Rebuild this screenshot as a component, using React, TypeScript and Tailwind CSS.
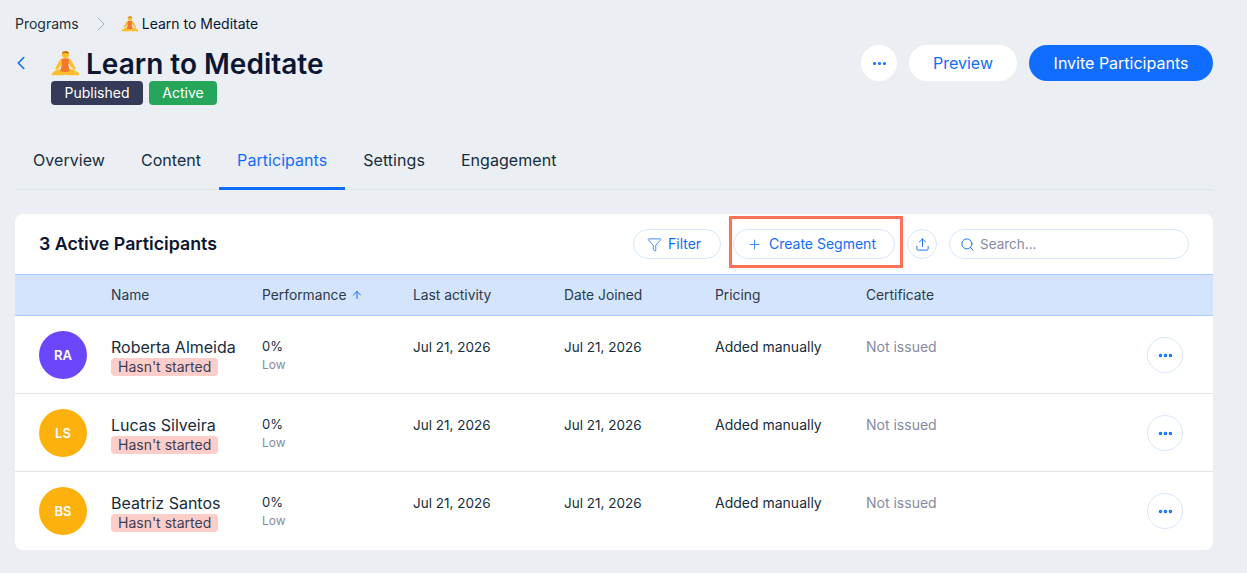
import { ChevronLeft, ChevronRight, Filter, Plus, Search, Upload, ArrowUp, MoreHorizontal } from "lucide-react";

const font = "font-['Inter','Liberation_Sans',sans-serif]";

const participants = [
  { initials: "RA", name: "Roberta Almeida", color: "bg-[#6b46fb]" },
  { initials: "LS", name: "Lucas Silveira", color: "bg-[#fdb10c]" },
  { initials: "BS", name: "Beatriz Santos", color: "bg-[#fdb10c]" },
];

const tabs = ["Overview", "Content", "Participants", "Settings", "Engagement"];
const columns = ["Performance", "Last activity", "Date Joined", "Pricing", "Certificate"];

function Meditate({ size }: { size: number }) {
  return (
    <svg width={size} height={size} viewBox="0 0 32 32" className="shrink-0">
      <path d="M10.500 22c-3.500.6-7 2.500-9.300 4.700-.9.900-.4 2.300.8 2.300h10c1.800 0 4-.6 4-.6s2.200.6 4 .6h10c1.200 0 1.700-1.400.8-2.300-2.300-2.200-5.800-4.100-9.300-4.700z" fill="#fbbf2d" />
      <path d="M11.500 10.500c-2 1-3.500 5.500-6.500 10.500-.6 1.100.6 2.300 1.700 1.700 3-1.800 5-5 6-7.500zM20.500 10.500c2 1 3.500 5.500 6.500 10.500.6 1.100-.6 2.300-1.700 1.700-3-1.800-5-5-6-7.500z" fill="#fbbf2d" />
      <path d="M11.800 10.800c2.700-.9 5.700-.9 8.400 0l-1 7.200 1.600 6.200c-3.200 1.400-7.400 1.400-10.600 0l1.600-6.200z" fill="#f4782a" />
      <circle cx="16" cy="6" r="4" fill="#fbc02f" />
      <path d="M12 5.200c.4-3.600 7.600-3.600 8 0-2.500-1-5.500-1-8 0z" fill="#c0691f" />
    </svg>
  );
}

function OutlineButton({ children, className }: { children: React.ReactNode; className: string }) {
  return (
    <button className={`flex h-[30px] items-center rounded-full border border-[#d6e6fe] bg-white text-sm text-[#116dff] ${className}`}>
      {children}
    </button>
  );
}

function Row({ person, last }: { person: (typeof participants)[number]; last: boolean }) {
  return (
    <div className={`grid h-[78px] grid-cols-[96px_151px_151px_151px_151px_151px_1fr_66px] ${last ? "" : "border-b border-[#dfe5eb]"}`}>
      <div className="pl-6 pt-[15px]">
        <div className={`flex h-12 w-12 items-center justify-center rounded-full pt-px text-[13px] font-semibold text-white ${person.color}`}>
          {person.initials}
        </div>
      </div>
      <div className="pt-[21px]">
        <div className="text-base leading-5 text-[#162d3d]">{person.name}</div>
        <div className="mt-px h-[18px] w-fit rounded-sm bg-[#fdcdc9] px-[7px] text-sm leading-[18px] text-[#3b4057]">Hasn't started</div>
      </div>
      <div className="pt-[21px]">
        <div className="text-[13px] leading-[18px] text-[#162d3d]">0%</div>
        <div className="mt-px text-xs leading-[18px] text-[#868aa5]">Low</div>
      </div>
      <div className="pt-[22px] text-[13.500px] leading-[18px] text-[#162d3d]">Jul 21, 2026</div>
      <div className="pt-[22px] text-[13.500px] leading-[18px] text-[#162d3d]">Jul 21, 2026</div>
      <div className="pt-[22px] text-sm leading-[18px] text-[#162d3d]">Added manually</div>
      <div className="pt-[22px] text-sm leading-[18px] text-[#868aa5]">Not issued</div>
      <div className="pt-[21px]">
        <button className="flex h-9 w-9 items-center justify-center rounded-full border border-[#d6e6fe] text-[#116dff]">
          <MoreHorizontal size={17} strokeWidth={3} />
        </button>
      </div>
    </div>
  );
}

export default function App() {
  return (
    <div className={`h-[573px] w-[1247px] overflow-hidden bg-[#ebeff4] pl-[15px] pr-[34px] text-[#162d3d] ${font}`}>
      <div className="flex h-[48px] items-center text-sm text-[#0c1633]">
        <span className="text-[#20303c]">Programs</span>
        <ChevronRight size={24} strokeWidth={1} className="ml-[10px] text-[#a8aec5]" />
        <span className="ml-[8px] flex items-center gap-[3px]">
          <Meditate size={18} />
          Learn to Meditate
        </span>
      </div>

      <div className="flex h-[57px] items-start justify-between">
        <div className="flex">
          <ChevronLeft size={22} strokeWidth={1.75} className="-ml-[5px] mt-[4px] text-[#116dff]" />
          <div className="ml-[19px]">
            <h1 className="-mt-px mb-px flex h-[33px] items-center gap-[6px] text-[28px] font-semibold leading-[30px] text-[#0c1633]">
              <Meditate size={29} />
              Learn to Meditate
            </h1>
            <div className="flex gap-1.5">
              <span className="flex h-6 w-[92px] items-center justify-center rounded-sm bg-[#343a57] text-sm text-white">Published</span>
              <span className="flex h-6 w-[68px] items-center justify-center rounded-sm bg-[#25a65a] text-sm text-white">Active</span>
            </div>
          </div>
        </div>
        <div className="-mt-[3px] flex items-center gap-3">
          <button className="flex h-9 w-9 items-center justify-center rounded-full bg-white text-[#116dff]">
            <MoreHorizontal size={17} strokeWidth={2.500} />
          </button>
          <button className="h-9 w-[108px] rounded-full bg-white text-base text-[#116dff]">Preview</button>
          <button className="h-9 w-[184px] rounded-full bg-[#116dff] text-base text-white">Invite Participants</button>
        </div>
      </div>

      <div className="mt-[25px] flex h-[60px] border-b border-[#dfe5eb]">
        {tabs.map((tab) => (
          <div
            key={tab}
            className={`flex h-[60px] items-center px-[18px] text-base tracking-[0.05px] ${tab === "Participants" ? "border-b-[3px] border-[#116dff] pt-[3px] text-[#116dff]" : "text-[#162d3d]"}`}
          >
            {tab}
          </div>
        ))}
      </div>

      <div className="mt-6 overflow-hidden rounded-lg bg-white">
        <div className="flex h-[60px] items-center pl-6 pr-6">
          <h2 className="pt-px text-[17.800px] font-semibold text-[#0c1633]">3 Active Participants</h2>
          <div className="ml-auto flex items-center">
            <OutlineButton className="w-[88px] gap-[6px] pl-[13px]">
              <Filter size={15} strokeWidth={1.25} />
              Filter
            </OutlineButton>
            <div className="relative ml-3">
              <OutlineButton className="w-[162px] gap-[7px] pl-[13px]">
                <Plus size={15} strokeWidth={1.25} />
                Create Segment
              </OutlineButton>
              <div className="absolute -bottom-[9px] -left-1 -right-2 -top-[13px] border-[3px] border-[#fd7257]" />
            </div>
            <OutlineButton className="ml-3 w-[30px] justify-center">
              <Upload size={15} strokeWidth={1.5} />
            </OutlineButton>
            <div className="ml-3 flex h-[30px] w-[240px] items-center gap-[5px] rounded-full border border-[#d6e6fe] pl-2.5 text-[13.500px] text-[#868aa5]">
              <Search size={15} strokeWidth={1.5} className="text-[#116dff]" />
              Search...
            </div>
          </div>
        </div>

        <div className="grid h-[42px] grid-cols-[96px_151px_151px_151px_151px_151px_1fr] items-center border-y border-[#a8caff] bg-[#d5e4fd] text-[13.800px] text-[#2b3a4a]">
          <div />
          <div>Name</div>
          {columns.map((col) => (
            <div key={col} className="flex items-center gap-[4px]">
              {col}
              {col === "Performance" && <ArrowUp size={12} strokeWidth={2} className="text-[#116dff]" />}
            </div>
          ))}
        </div>

        {participants.map((person, i) => (
          <Row key={person.initials} person={person} last={i === participants.length - 1} />
        ))}
      </div>
    </div>
  );
}
